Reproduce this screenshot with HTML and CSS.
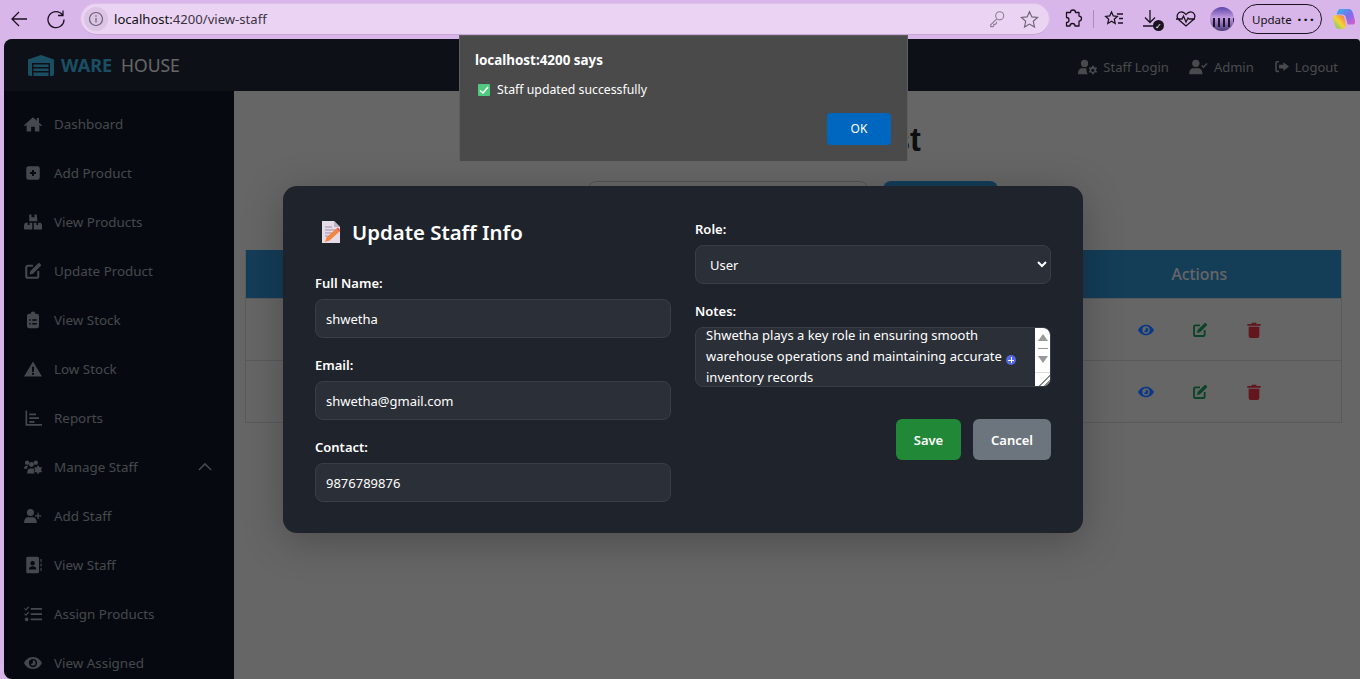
FILE: index.html
```html
<!DOCTYPE html>
<html lang="en">
<head>
<meta charset="utf-8">
<title>Warehouse - View Staff</title>
<link rel="stylesheet" href="styles.css">
</head>
<body>
<svg class="sprite" aria-hidden="true">
  <symbol id="i-house" viewBox="0 0 24 24"><path d="M12 3 0 13.500l1.500 1.500L3.500 13.300V22h6v-6.500h5V22h6v-8.700l2 1.700 1.500-1.500L20 10.300V4h-3v3.700z"/></symbol>
  <symbol id="i-plus" viewBox="0 0 24 24"><path fill-rule="evenodd" d="M6 3h12a3 3 0 0 1 3 3v12a3 3 0 0 1-3 3H6a3 3 0 0 1-3-3V6a3 3 0 0 1 3-3zm4.700 5v2.700H8v2.600h2.700V16h2.600v-2.700H16v-2.600h-2.700V8z"/></symbol>
  <symbol id="i-boxes" viewBox="0 0 24 24"><path d="M7 2h3v3.500h4V2h3v1l1 8H7zM1.500 13H5v3h2.500v-3H11v9H1a1 1 0 0 1-1-1v-5zM13 13h3.500v3H19v-3h3.500l1.500 3v5a1 1 0 0 1-1 1H13z"/></symbol>
  <symbol id="i-edit" viewBox="0 0 24 24"><path fill="none" stroke="currentColor" stroke-width="2.800" d="M12 5H5a2 2 0 0 0-2 2v12a2 2 0 0 0 2 2h12a2 2 0 0 0 2-2v-7"/><path d="M8.500 12 18 2.500l3.500 3.500L12 15.500l-4.500 1zM19 1.500l1-.5 3 3-.5 1-1 1L18 2.500z"/></symbol>
  <symbol id="i-clip" viewBox="0 0 24 24"><path fill-rule="evenodd" d="M9 3.500a3 3 0 0 1 6 0h2a3 3 0 0 1 3 3V20a3 3 0 0 1-3 3H7a3 3 0 0 1-3-3V6.500a3 3 0 0 1 3-3zM7 11v2h2v-2zm4 0v2h6v-2zm-4 5v2h2v-2zm4 0v2h6v-2z"/></symbol>
  <symbol id="i-warn" viewBox="0 0 24 24"><path fill-rule="evenodd" d="M12 2 24 22H0zm-1.500 7 .4 7h2.200l.4-7zM12 17a1.500 1.500 0 1 0 0 3 1.500 1.500 0 0 0 0-3z"/></symbol>
  <symbol id="i-chart" viewBox="0 0 24 24"><path d="M2 2h2.200v18H24v2.200H2zM7 6h9v2.200H7zm0 5h13v2.200H7zm0 5h7v2.200H7z"/></symbol>
  <symbol id="i-staff" viewBox="0 0 29 24"><circle cx="5" cy="5" r="3.500"/><circle cx="19" cy="5" r="3.500"/><circle cx="12" cy="8" r="4"/><path d="M0 15c0-3 2-5 4-5h3c-1 1-2 2.500-2 5zM5 22.500c0-5 2-8 5-8h4c1 0 2 .3 3 1-1.500 2-1.500 5 0 7zM21.500 10h2.500l.5 2 1.500.8 2-.6 1 2-1.500 1.500v1.600l1.500 1.500-1 2-2-.6-1.500.8-.5 2h-2.500l-.5-2-1.500-.8-2 .6-1-2 1.500-1.500v-1.600l-1.500-1.500 1-2 2 .6 1.500-.8z"/></symbol>
  <symbol id="i-chevron" viewBox="0 0 16 10"><path fill="none" stroke="currentColor" stroke-width="1.800" d="M1 9 8 2l7 7"/></symbol>
  <symbol id="i-userplus" viewBox="0 0 28 24"><circle cx="10" cy="6.500" r="5.500"/><path d="M0 23c0-6 3-9 6-9h8c3 0 6 3 6 9zM21 7h2v4h4v1.600h-4v4h-2v-4h-4V11h4z"/></symbol>
  <symbol id="i-book" viewBox="0 0 24 24"><path fill-rule="evenodd" d="M5 1h13a2 2 0 0 1 2 2v18a2 2 0 0 1-2 2H5a2 2 0 0 1-2-2V3a2 2 0 0 1 2-2zm6.500 5.500a3 3 0 1 0 0 6 3 3 0 0 0 0-6zM6.500 18h10c0-3-2-4.500-5-4.500s-5 1.500-5 4.500z"/><path d="M22 4h1.500v4H22zm0 6h1.500v4H22zm0 6h1.500v4H22z"/></symbol>
  <symbol id="i-tasks" viewBox="0 0 24 24"><path d="M9 4h15v2.400H9zm0 7h15v2.400H9zm0 7h15v2.400H9zM1 4l1.500 1.500L5.500 2 7 3 2.700 7.800 0 5zM1 11l1.500 1.500 3-3.500L7 10l-4.300 4.800L0 12zM3.500 16.500a2.500 2.500 0 1 0 0 5 2.500 2.500 0 0 0 0-5z"/></symbol>
  <symbol id="i-eye" viewBox="0 0 24 24"><path fill-rule="evenodd" d="M12 4c6 0 10 4 12 8-2 4-6 8-12 8S2 16 0 12c2-4 6-8 12-8zm0 2.500a5.500 5.500 0 1 0 0 11 5.500 5.500 0 0 0 0-11zm0 2a3.500 3.500 0 1 1-3.400 4.300c.9.500 2 .4 2.700-.3s.8-1.900.3-2.700c.1-.9.200-1.300.4-1.300z"/></symbol>
  <symbol id="i-usercog" viewBox="0 0 29 24"><circle cx="10" cy="6.500" r="5.500"/><path d="M0 23c0-6 3-9 6-9h7c-.5 3 0 6 2 9zM21.500 10h2.500l.5 2 1.500.8 2-.6 1 2-1.500 1.500v1.600l1.500 1.500-1 2-2-.6-1.500.8-.5 2h-2.500l-.5-2-1.500-.8-2 .6-1-2 1.500-1.500v-1.600l-1.500-1.500 1-2 2 .6 1.500-.8zm1.200 4.500a2.500 2.500 0 1 0 0 5 2.500 2.500 0 0 0 0-5z"/></symbol>
  <symbol id="i-usercheck" viewBox="0 0 28 24"><circle cx="10" cy="6.500" r="5.500"/><path d="M0 23c0-6 3-9 6-9h8c3 0 6 3 6 9zM26 6l1.500 1.500-6 6.500-3.500-3.500L19.500 9l2 2z"/></symbol>
  <symbol id="i-logout" viewBox="0 0 24 24"><path d="M8 3H5a3 3 0 0 0-3 3v12a3 3 0 0 0 3 3h3v-2.500H5a.5.5 0 0 1-.5-.5V6a.5.5 0 0 1 .5-.5h3zM15 5l9 7-9 7v-4H8V9h7z"/></symbol>
  <symbol id="i-trash" viewBox="0 0 24 24"><path d="M9 1h6l1 2h6v2.500H2V3h6zM4 7h16v14a3 3 0 0 1-3 3H7a3 3 0 0 1-3-3z"/></symbol>
  <symbol id="i-warehouse" viewBox="0 0 26 21"><path fill-rule="evenodd" d="M13 0 26 4.500V19a2 2 0 0 1-2 2h-2V8H4v13H2a2 2 0 0 1-2-2V4.500zM5.500 9.500h15v2.500h-15zm0 4h15V16h-15zm0 4h15V21h-15z"/></symbol>
</svg>

<header class="browser-bar">
  <svg class="tb-icon tb-back" viewBox="0 0 20 20"><path d="M18 10H3M10 3l-7 7 7 7"/></svg>
  <svg class="tb-icon tb-reload" viewBox="0 0 20 20"><path d="M16.500 6A8 8 0 1 0 18 10.500M17 1.500V6.500h-5"/></svg>
  <div class="address">
    <span class="site-chip"><svg class="chip-icon" viewBox="0 0 16 16"><circle cx="8" cy="8" r="6.500"/><path d="M8 7v4.500M8 4.300v1.400"/></svg></span>
    <span class="url"><b class="url-host">localhost:</b>4200/view-staff</span>
    <svg class="addr-icon addr-key" viewBox="0 0 20 20"><circle cx="13" cy="6.500" r="4.500"/><path d="M9.800 9.800 3 16.500v2h2.500l1-1v-1.500H8l1.500-1.500v-1.500"/></svg>
    <svg class="addr-icon addr-star" viewBox="0 0 20 20"><path d="m10 1.800 2.500 5.500 6 .6-4.500 4 1.300 6L10 14.800l-5.300 3.100 1.300-6-4.500-4 6-.6z"/></svg>
  </div>
  <svg class="tb-icon tb-ext" viewBox="0 0 20 20"><path d="M7.500 3.500a2.500 2.500 0 0 1 5 0H16v3.600a2.500 2.500 0 0 1 0 5V17h-4a2.500 2.500 0 0 0-5 0H3.500v-3.500a2.500 2.500 0 0 0 0-5V3.500z" stroke-linejoin="round"/></svg>
  <span class="tb-sep"></span>
  <svg class="tb-icon tb-fav" viewBox="0 0 20 20"><path d="m7.500 3 1.800 4 4 .4-3 2.900.9 4.200-3.700-2.200-3.700 2.200.9-4.200-3-2.900 4-.4zM13 5h6M15 9.500h4M14 14h5"/></svg>
  <span class="tb-download">
    <svg class="tb-icon" viewBox="0 0 20 20"><path d="M9 1v12M4 8.500 9 13.500l5-5M2 17h12"/></svg>
    <span class="dl-badge">✓</span>
  </span>
  <svg class="tb-icon tb-heart" viewBox="0 0 20 20"><path d="M10 17 2.500 10.500C-.5 7 2 2.500 6 3c2 .2 3 1.500 4 2.500C11 4.500 12 3.200 14 3c4-.5 6.500 4 3.500 7.500zM0 10h6l1.500-3 2.500 6 2-4 1 1h6"/></svg>
  <span class="avatar"></span>
  <span class="update-pill"><span>Update</span><span class="dots">···</span></span>
  <svg class="copilot" viewBox="0 0 24 24">
    <defs>
      <linearGradient id="cp1" x1="0" y1="0" x2="1" y2="1"><stop offset="0" stop-color="#2fb7e8"/><stop offset=".55" stop-color="#7f6cf0"/><stop offset="1" stop-color="#e35cc0"/></linearGradient>
      <linearGradient id="cp2" x1="0" y1="1" x2="1" y2="0"><stop offset="0" stop-color="#3ecf6a"/><stop offset=".5" stop-color="#f6d33c"/><stop offset="1" stop-color="#f2703a"/></linearGradient>
    </defs>
    <path fill="url(#cp1)" d="M8 1h9c3 0 4 2 5 5l2 8c.5 3-1 4-3 4h-5l-2-8c-.6-2-2-3-4-3H4C5 3 6 1 8 1z"/>
    <path fill="url(#cp2)" d="M2 8h7c2 0 3 1 3.500 3L14 18c.5 2-1 5-4 5H7c-3 0-4-2-5-5L0 12c-.5-2 .5-4 2-4z"/>
  </svg>
</header>

<div class="app">
  <nav class="topnav">
    <div class="brand">
      <svg class="brand-icon"><use href="#i-warehouse"/></svg>
      <span class="brand-ware">WARE</span>
      <span class="brand-house">HOUSE</span>
    </div>
    <ul class="nav-links">
      <li class="nav-link"><svg class="nav-icon"><use href="#i-usercog"/></svg>Staff Login</li>
      <li class="nav-link"><svg class="nav-icon"><use href="#i-usercheck"/></svg>Admin</li>
      <li class="nav-link"><svg class="nav-icon nav-icon-sm"><use href="#i-logout"/></svg>Logout</li>
    </ul>
  </nav>

  <div class="body-row">
    <aside class="sidebar">
      <ul class="side-list">
        <li class="side-item"><svg class="side-icon"><use href="#i-house"/></svg>Dashboard</li>
        <li class="side-item"><svg class="side-icon"><use href="#i-plus"/></svg>Add Product</li>
        <li class="side-item"><svg class="side-icon"><use href="#i-boxes"/></svg>View Products</li>
        <li class="side-item"><svg class="side-icon"><use href="#i-edit"/></svg>Update Product</li>
        <li class="side-item"><svg class="side-icon"><use href="#i-clip"/></svg>View Stock</li>
        <li class="side-item"><svg class="side-icon"><use href="#i-warn"/></svg>Low Stock</li>
        <li class="side-item"><svg class="side-icon"><use href="#i-chart"/></svg>Reports</li>
        <li class="side-item"><svg class="side-icon"><use href="#i-staff"/></svg>Manage Staff<svg class="side-chevron"><use href="#i-chevron"/></svg></li>
        <li class="side-item"><svg class="side-icon"><use href="#i-userplus"/></svg>Add Staff</li>
        <li class="side-item"><svg class="side-icon"><use href="#i-book"/></svg>View Staff</li>
        <li class="side-item"><svg class="side-icon"><use href="#i-tasks"/></svg>Assign Products</li>
        <li class="side-item"><svg class="side-icon"><use href="#i-eye"/></svg>View Assigned</li>
      </ul>
    </aside>

    <main class="content">
      <h1 class="page-title">Staff Details List</h1>
      <div class="search-row">
        <input class="search-input" type="text" aria-label="Search">
        <button class="search-btn" type="button" aria-label="Search"></button>
      </div>
      <table class="staff-table">
        <thead>
          <tr><th class="col-main"></th><th class="col-actions">Actions</th></tr>
        </thead>
        <tbody>
          <tr>
            <td></td>
            <td><div class="actions">
              <svg class="act act-view"><use href="#i-eye"/></svg>
              <svg class="act act-edit"><use href="#i-edit"/></svg>
              <svg class="act act-del"><use href="#i-trash"/></svg>
            </div></td>
          </tr>
          <tr>
            <td></td>
            <td><div class="actions">
              <svg class="act act-view"><use href="#i-eye"/></svg>
              <svg class="act act-edit"><use href="#i-edit"/></svg>
              <svg class="act act-del"><use href="#i-trash"/></svg>
            </div></td>
          </tr>
        </tbody>
      </table>
    </main>
  </div>

  <div class="backdrop">
    <form class="modal">
      <div class="modal-col">
        <h2 class="modal-title">
          <svg class="title-emoji" viewBox="0 0 22 24">
            <path fill="#e6dbe9" d="M2 1h12l6 6v16H2z"/>
            <path fill="#bfb2c6" d="M14 1l6 6h-6z"/>
            <path stroke="#9c90a6" stroke-width="1.200" d="M5 7h7M5 10h11M5 13h8M5 16h5"/>
            <path fill="#f5843c" d="M5 22l1.500-4.500L16 9l3 3-9.500 8.500z"/>
            <path fill="#ef5a4c" d="M16 9l2-1.500 2.500 3-1.500 1.500z"/>
          </svg>
          Update Staff Info
        </h2>
        <label class="field">
          <span class="field-label">Full Name:</span>
          <input class="control" type="text" value="shwetha">
        </label>
        <label class="field">
          <span class="field-label">Email:</span>
          <input class="control" type="text" value="shwetha@gmail.com">
        </label>
        <label class="field field-last">
          <span class="field-label">Contact:</span>
          <input class="control" type="text" value="9876789876">
        </label>
      </div>
      <div class="modal-col">
        <label class="field">
          <span class="field-label">Role:</span>
          <select class="control control-select">
            <option>User</option>
          </select>
        </label>
        <div class="field">
          <span class="field-label">Notes:</span>
          <div class="notes">
            <p class="notes-text">Shwetha plays a key role in ensuring smooth warehouse operations and maintaining accurate inventory records</p>
            <span class="notes-bar">
              <span class="bar-up"></span>
              <span class="bar-mid"></span>
              <span class="bar-down"></span>
              <span class="bar-grip"></span>
            </span>
            <span class="notes-plus"></span>
          </div>
        </div>
        <div class="modal-buttons">
          <button class="btn btn-save" type="button">Save</button>
          <button class="btn btn-cancel" type="button">Cancel</button>
        </div>
      </div>
    </form>
  </div>
</div>

<div class="alert" role="alertdialog">
  <div class="alert-title">localhost:4200 says</div>
  <div class="alert-msg"><span class="alert-check"><svg viewBox="0 0 12 12"><path d="M2 6.500 5 9l5-6"/></svg></span>Staff updated successfully</div>
  <div class="alert-foot"><button class="alert-ok" type="button">OK</button></div>
</div>
</body>
</html>
```

FILE: styles.css
```css
* { box-sizing: border-box; }
html, body { height: 100%; }
body {
  margin: 0;
  height: 679px;
  overflow: hidden;
  display: flex;
  flex-direction: column;
  background: #d9b6e9;
  font-family: "Noto Sans", "Open Sans", sans-serif;
  font-size: 13px;
  position: relative;
}
.sprite { display: none; }
ul { list-style: none; margin: 0; padding: 0; }

/* browser chrome */
.browser-bar {
  flex: 0 0 39px;
  display: flex;
  align-items: center;
  padding-left: 9px;
  padding-bottom: 1px;
}
.tb-icon { width: 20px; height: 20px; flex: none; fill: none; stroke: #1b1320; stroke-width: 1.300; }
.tb-reload { margin-left: 17px; }
.address {
  width: 968px;
  height: 30px;
  margin-left: 15px;
  border-radius: 15px;
  background: #ebd3f4;
  box-shadow: 0 1px 0 #c7a5d6, 0 0 0 1px #dcc0e8;
  display: flex;
  align-items: center;
  padding-left: 3px;
}
.site-chip {
  width: 24px;
  height: 24px;
  border-radius: 50%;
  background: #dcc4e6;
  display: flex;
  align-items: center;
  justify-content: center;
}
.chip-icon { width: 16px; height: 16px; fill: none; stroke: #6b6070; stroke-width: 1.200; }
.url { margin-left: 6px; font-size: 13.100px; color: #3a3340; flex: 1; }
.url-host { font-weight: 400; color: #111; }
.addr-icon { width: 18px; height: 18px; fill: none; stroke: #8a7f90; stroke-width: 1.200; }
.addr-star { margin: 0 10px 0 14px; stroke: #6f6575; width: 19px; height: 19px; }
.tb-ext { margin-left: 14px; }
.tb-sep { width: 1px; height: 18px; background: #a78eb4; margin: 0 10px; }
.tb-download { position: relative; width: 20px; height: 20px; margin-left: 17px; }
.dl-badge {
  position: absolute;
  right: -3px;
  bottom: -2px;
  width: 11px;
  height: 11px;
  border-radius: 50%;
  background: #1b1320;
  color: #fff;
  font-size: 8px;
  line-height: 11px;
  text-align: center;
}
.tb-heart { margin-left: 15px; }
.avatar {
  width: 24px;
  height: 24px;
  border-radius: 50%;
  margin-left: 14px;
  background:
    repeating-linear-gradient(90deg, transparent 0 3px, #1e1430 3px 5px) 0 11px / 100% 9px no-repeat,
    linear-gradient(#5d45a8, #c29ae0 45%, #4a3a78);
}
.update-pill {
  width: 80px;
  height: 30px;
  margin-left: 8px;
  border: 1.500px solid #1b1320;
  border-radius: 15px;
  display: flex;
  align-items: center;
  justify-content: space-between;
  padding: 0 5px 0 9px;
  font-size: 11.500px;
  color: #111;
}
.dots { font-weight: 700; font-size: 15px; letter-spacing: 2px; }
.copilot { width: 22px; height: 22px; margin-left: 11px; flex: none; }

/* application */
.app {
  flex: 1;
  min-height: 0;
  margin-left: 4px;
  position: relative;
  overflow: hidden;
  border-radius: 8px 4px 0 8px;
  display: flex;
  flex-direction: column;
  background: #fff;
}
.topnav {
  flex: 0 0 52px;
  background: #212a39;
  display: flex;
  align-items: center;
  justify-content: space-between;
  padding: 3px 22px 0 24px;
}
.brand { display: flex; align-items: center; font-size: 18px; margin-top: -3px; }
.brand-icon { width: 26px; height: 21px; fill: #41c4f5; margin-right: 7px; }
.brand-ware { font-weight: 700; color: #41c4f5; margin-right: 9px; }
.brand-house { color: #fff; font-size: 17.500px; }
.nav-links { display: flex; gap: 20px; }
.nav-link { display: flex; align-items: center; color: #b4bac0; font-size: 13px; }
.nav-icon { width: 19px; height: 16px; margin-right: 6px; fill: currentColor; }
.nav-icon-sm { width: 15px; height: 15px; }

.body-row { flex: 1; min-height: 0; display: flex; }
.sidebar { flex: 0 0 230px; background: #0f1928; padding-top: 8px; overflow: hidden; }
.side-item {
  height: 49px;
  display: flex;
  align-items: center;
  padding: 0 22px 0 20px;
  color: #adb5bd;
  font-size: 13.400px;
}
.side-icon { width: 18px; height: 18px; margin-right: 12px; flex: none; fill: currentColor; }
.side-chevron { width: 14px; height: 9px; margin-left: auto; color: #adb5bd; }

.content { flex: 1; min-width: 0; padding: 30px 18px 0 11px; }
.page-title {
  margin: 0 0 22px;
  font-family: "Liberation Sans", Arial, sans-serif;
  font-size: 32.500px;
  line-height: 38px;
  font-weight: 700;
  text-align: center;
  color: #212529;
}
.search-row { display: flex; justify-content: center; gap: 15px; margin-bottom: 31px; padding-right: 2px; }
.search-input { width: 280px; height: 38px; border: 1px solid #ced4da; border-radius: 8px; }
.search-btn { width: 115px; height: 38px; border: 0; border-radius: 8px; background: #3498db; }
.staff-table { width: 100%; border-collapse: collapse; table-layout: fixed; }
.staff-table th, .staff-table td { border-bottom: 1px solid #dee2e6; }
.staff-table th { height: 48px; background: #3498db; color: #fff; font-size: 15.800px; font-weight: 500; text-align: center; }
.staff-table td { height: 62px; }
.staff-table tr > :first-child { border-left: 1px solid #dee2e6; }
.staff-table tr > :last-child { border-right: 1px solid #dee2e6; }
.col-actions { width: 284px; }
.actions { display: flex; justify-content: center; gap: 38px; padding: 2px 0 0 2px; }
.act { width: 16px; height: 16px; position: relative; z-index: 11; flex: none; }
.act-view { fill: #0a3888; color: #0a3888; }
.act-edit { fill: #0a4428; color: #0a4428; }
.act-del { fill: #64161f; color: #64161f; }

/* modal */
.backdrop {
  position: absolute;
  inset: 0;
  z-index: 10;
  background: rgba(0, 0, 0, .6);
  display: flex;
  align-items: center;
  justify-content: center;
}
.modal {
  width: 800px;
  margin: 1px 0 0 2px;
  padding: 32px 32px 31px;
  border-radius: 14px;
  background: #1f232b;
  box-shadow: 0 8px 40px rgba(0, 0, 0, .25);
  display: flex;
  gap: 24px;
  color: #fff;
  position: relative;
  z-index: 12;
}
.modal-col { flex: 1; min-width: 0; }
.modal-title {
  margin: 0 0 26px;
  height: 28px;
  display: flex;
  align-items: center;
  font-size: 20.400px;
  font-weight: 600;
  color: #fff;
}
.title-emoji { width: 22px; height: 24px; margin: 0 10px 0 5px; flex: none; fill: none; }
.field { display: block; margin-bottom: 16px; }
.field-last { margin-bottom: 0; }
.field-label { display: block; font-size: 13px; font-weight: 600; line-height: 21px; padding-top: 1px; margin-bottom: 5px; height: 22px; }
.control {
  display: block;
  width: 100%;
  height: 39px;
  padding: 0 10px;
  background: #2b2f38;
  border: 1px solid #3a3e47;
  border-radius: 8px;
  color: #fff;
  font: inherit;
  font-size: 13px;
}
.control-select { color-scheme: dark; }
.notes {
  position: relative;
  height: 60px;
  background: #2b2f38;
  border: 1px solid #3a3e47;
  border-radius: 8px;
  overflow: hidden;
}
.notes-text { margin: -3px 0 0; padding: 0 40px 0 10px; line-height: 21px; font-size: 13px; }
.notes-bar {
  position: absolute;
  top: 0;
  right: 0;
  bottom: 0;
  width: 15px;
  background: #fff;
  display: flex;
  flex-direction: column;
  align-items: center;
}
.bar-up, .bar-down { width: 0; height: 0; border-left: 5px solid transparent; border-right: 5px solid transparent; }
.bar-up { border-bottom: 7px solid #999; margin-top: 6px; }
.bar-mid { width: 10px; height: 1px; background: #999; margin: 7px 0; }
.bar-down { border-top: 7px solid #999; }
.bar-grip {
  margin-top: auto;
  width: 15px;
  height: 14px;
  border-top: 1px solid #ddd;
  background: linear-gradient(135deg, transparent 60%, #888 60% 66%, transparent 66% 78%, #888 78% 84%, transparent 84%);
}
.notes-plus {
  position: absolute;
  top: 27px;
  right: 34px;
  width: 10px;
  height: 10px;
  border-radius: 50%;
  background: linear-gradient(#fff, #fff) center / 6px 1px no-repeat, linear-gradient(#fff, #fff) center / 1px 6px no-repeat, #5468e0;
}
.modal-buttons { display: flex; justify-content: flex-end; gap: 12px; margin-top: 32px; }
.btn { height: 41px; border: 0; border-radius: 6px; color: #fff; font: inherit; font-size: 13px; font-weight: 600; }
.btn-save { width: 65px; background: #218838; }
.btn-cancel { width: 78px; background: #6c757d; }

/* native alert */
.alert {
  position: absolute;
  left: 459px;
  top: 35px;
  z-index: 20;
  width: 449px;
  height: 126px;
  padding: 15px 16px 0 15px;
  background: #4a4a4a;
  border: 1px solid #5e5e5e;
  border-bottom: 0;
  color: #fff;
  font-size: 13px;
}
.alert-title { font-weight: 700; font-size: 13.400px; line-height: 18px; margin-bottom: 12px; }
.alert-msg { display: flex; align-items: center; font-size: 12.300px; line-height: 18px; padding-left: 3px; }
.alert-check { width: 12px; height: 12px; margin-right: 7px; background: #4fc97f; border-radius: 1px; display: flex; }
.alert-check svg { width: 12px; height: 12px; fill: none; stroke: #fff; stroke-width: 1.500; }
.alert-foot { display: flex; justify-content: flex-end; margin-top: 14px; }
.alert-ok { width: 64px; height: 32px; border: 0; border-radius: 4px; background: #0067c0; color: #fff; font: inherit; font-size: 12px; padding-bottom: 2px; }
```
